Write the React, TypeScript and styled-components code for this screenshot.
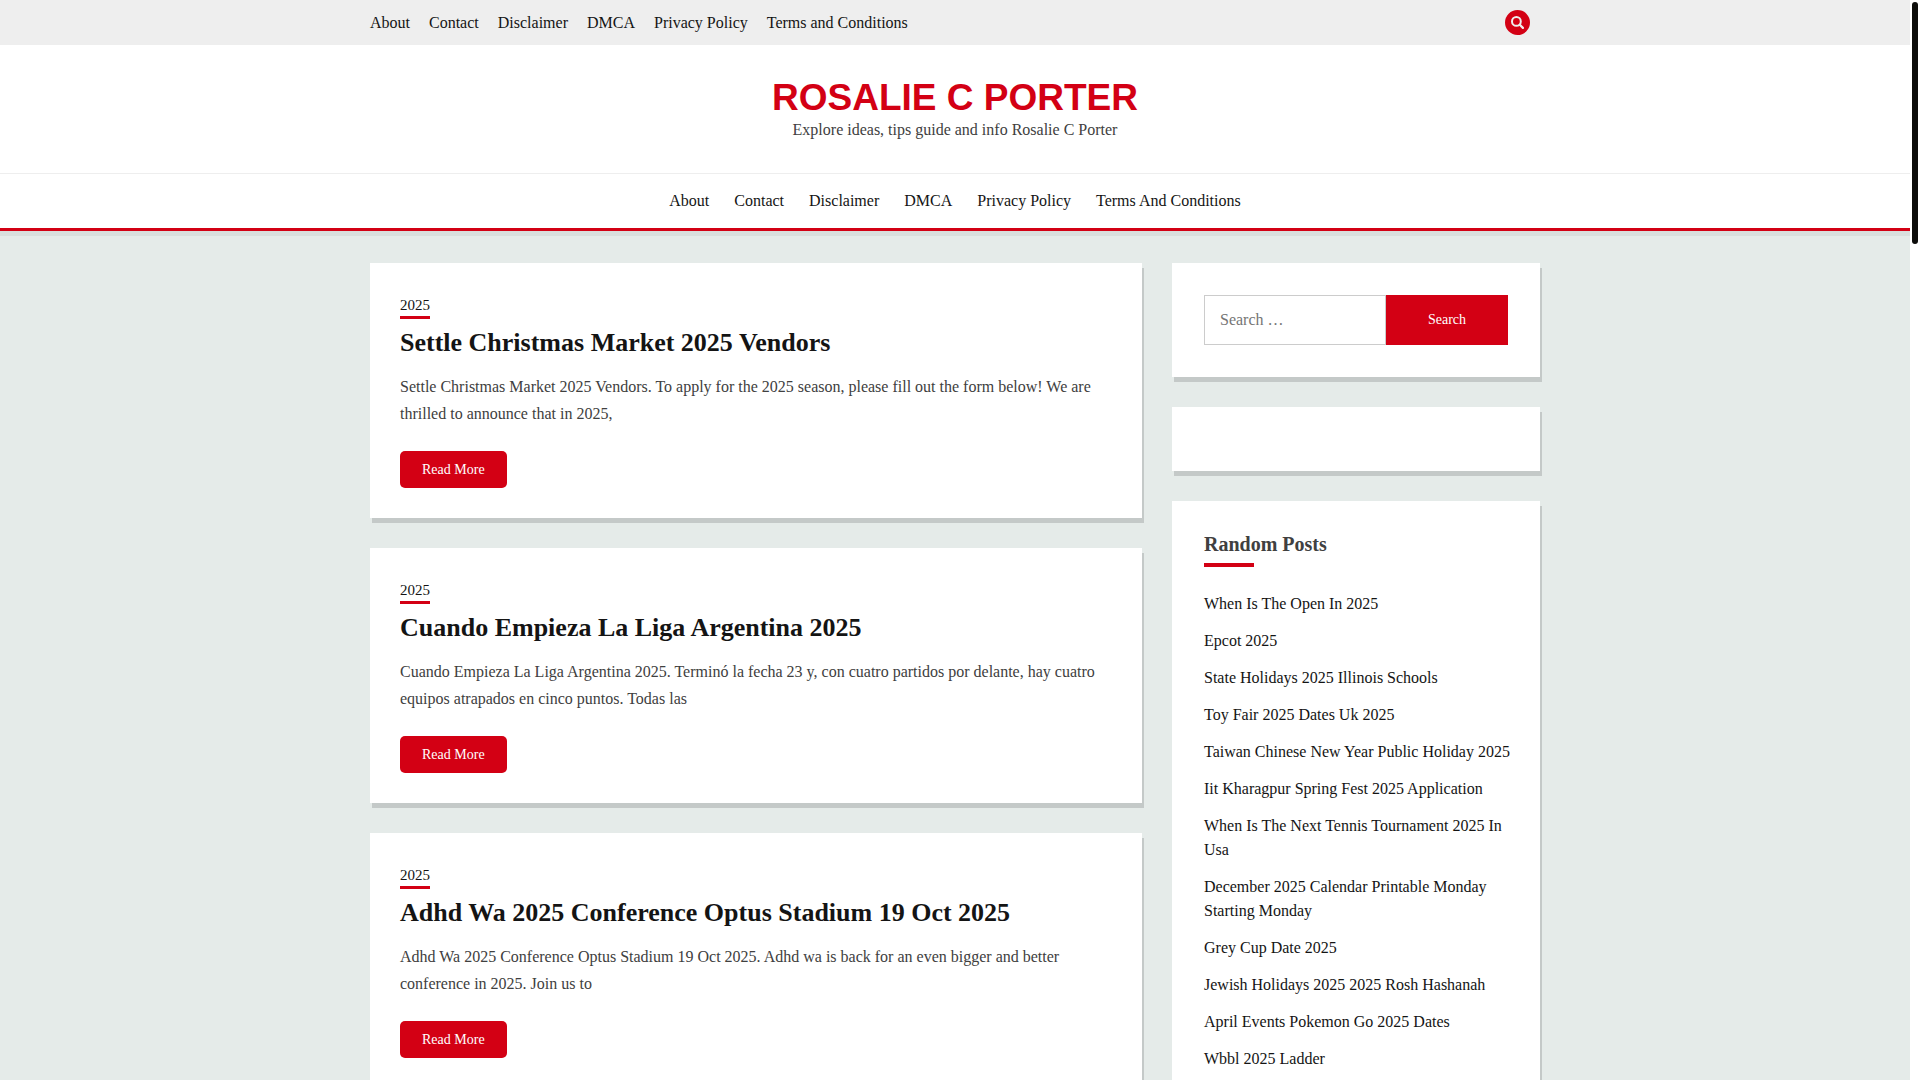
import React from "react";
import styled, { createGlobalStyle } from "styled-components";

const red = "#d30014";
const ink = "#141414";
const serif = `"Liberation Serif", "Times New Roman", serif`;

const GlobalStyle = createGlobalStyle`
  *, *::before, *::after { box-sizing: border-box; }
  body {
    margin: 0;
    overflow: hidden;
    background: #fff;
    color: #404040;
    font: 16px/27px ${serif};
  }
  a { color: ${ink}; text-decoration: none; }
  h1, h2, p, ul { margin: 0; padding: 0; }
  ul { list-style: none; }
`;

const Shell = styled.div`
  display: grid;
  grid-template-columns: minmax(0, 1fr) 10px;
  height: 100vh;
`;

const Page = styled.div`
  overflow: hidden;
  background: #e5ebe9;
`;

const ScrollTrack = styled.div`
  padding: 2px;
  background: #fff;
`;

const ScrollThumb = styled.div`
  height: 242px;
  border-radius: 3px;
  background: #0d0d0b;
`;

const Container = styled.div`
  max-width: 1170px;
  margin: 0 auto;
`;

const TopBar = styled.div`
  background: #eee;
`;

const TopBarInner = styled(Container)`
  display: flex;
  align-items: center;
  justify-content: space-between;
  padding: 9px 10px 9px 0;
`;

const Menu = styled.ul<{ $gap: number }>`
  display: flex;
  flex-wrap: wrap;
  justify-content: center;
  gap: 0 ${(p) => p.$gap}px;
`;

const SearchToggle = styled.button`
  display: grid;
  place-items: center;
  width: 25px;
  height: 25px;
  padding: 0;
  border: 0;
  border-radius: 50%;
  background: ${red};
  color: #eee;
  cursor: pointer;
`;

const Branding = styled.div`
  padding: 32px 0 31px;
  background: #fff;
  text-align: center;
`;

const SiteTitle = styled.h1`
  font: bold 37px/41px "Liberation Sans", Arial, sans-serif;
  text-transform: uppercase;

  a { color: ${red}; }
`;

const Tagline = styled.p`
  line-height: 24px;
`;

const MainNav = styled.nav`
  position: relative;
  padding: 13px 0 14px;
  border-top: 1px solid #eee;
  border-bottom: 3px solid ${red};
  background: #fff;
  box-shadow: 0 5px 0 rgba(0, 0, 0, 0.05);
`;

const Columns = styled(Container)`
  display: grid;
  grid-template-columns: minmax(0, 1fr) 368px;
  align-items: start;
  gap: 30px;
  padding-top: 32px;
`;

const Stack = styled.div`
  display: grid;
  grid-template-columns: minmax(0, 1fr);
  gap: 30px;
`;

const Card = styled.article`
  padding: 30px;
  background: #fff;
  box-shadow: 2px 5px 0 rgba(0, 0, 0, 0.14);
`;

const Widget = styled.section`
  padding: 32px;
  background: #fff;
  box-shadow: 2px 5px 0 rgba(0, 0, 0, 0.14);
`;

const Category = styled.a`
  display: block;
  width: fit-content;
  padding-top: 2px;
  border-bottom: 3px solid ${red};
  font-size: 15px;
  line-height: 21px;
`;

const PostTitle = styled.h2`
  margin: 6px 0 12px;
  font-size: 26px;
  line-height: 36px;
`;

const ReadMore = styled.a`
  display: block;
  width: fit-content;
  margin-top: 24px;
  padding: 10px 22px;
  border-radius: 5px;
  background: ${red};
  color: #fff;
  font-size: 14px;
  line-height: 17px;
`;

const SearchForm = styled.form`
  display: flex;
  height: 50px;
`;

const SearchField = styled.input`
  flex: 1;
  min-width: 0;
  padding: 0 15px;
  border: 1px solid #ccc;
  border-radius: 0;
  background: #fff;
  color: #404040;
  font: 16px ${serif};

  &::placeholder { color: #757575; }
`;

const SearchButton = styled.button`
  width: 122px;
  padding: 0;
  border: 0;
  background: ${red};
  color: #fff;
  font: 14px ${serif};
  cursor: pointer;
`;

const WidgetTitle = styled.h2`
  margin-bottom: 25px;
  font-size: 20px;
  line-height: 22px;

  &::after {
    content: "";
    display: block;
    width: 50px;
    height: 4px;
    margin-top: 8px;
    background: ${red};
  }
`;

const PostList = styled.ul`
  display: grid;
  gap: 13px;
  line-height: 24px;

  && { margin-right: -8px; }
`;

const topLinks = ["About", "Contact", "Disclaimer", "DMCA", "Privacy Policy", "Terms and Conditions"];
const navLinks = ["About", "Contact", "Disclaimer", "DMCA", "Privacy Policy", "Terms And Conditions"];

const posts = [
  {
    title: "Settle Christmas Market 2025 Vendors",
    excerpt:
      "Settle Christmas Market 2025 Vendors. To apply for the 2025 season, please fill out the form below! We are thrilled to announce that in 2025,",
  },
  {
    title: "Cuando Empieza La Liga Argentina 2025",
    excerpt:
      "Cuando Empieza La Liga Argentina 2025. Terminó la fecha 23 y, con cuatro partidos por delante, hay cuatro equipos atrapados en cinco puntos. Todas las",
  },
  {
    title: "Adhd Wa 2025 Conference Optus Stadium 19 Oct 2025",
    excerpt:
      "Adhd Wa 2025 Conference Optus Stadium 19 Oct 2025. Adhd wa is back for an even bigger and better conference in 2025. Join us to",
  },
];

const randomPosts = [
  "When Is The Open In 2025",
  "Epcot 2025",
  "State Holidays 2025 Illinois Schools",
  "Toy Fair 2025 Dates Uk 2025",
  "Taiwan Chinese New Year Public Holiday 2025",
  "Iit Kharagpur Spring Fest 2025 Application",
  "When Is The Next Tennis Tournament 2025 In Usa",
  "December 2025 Calendar Printable Monday Starting Monday",
  "Grey Cup Date 2025",
  "Jewish Holidays 2025 2025 Rosh Hashanah",
  "April Events Pokemon Go 2025 Dates",
  "Wbbl 2025 Ladder",
];

function Links({ items, gap }: { items: string[]; gap: number }) {
  return (
    <Menu $gap={gap}>
      {items.map((item) => (
        <li key={item}>
          <a href="#">{item}</a>
        </li>
      ))}
    </Menu>
  );
}

export default function App() {
  return (
    <Shell>
      <GlobalStyle />
      <Page>
        <header>
          <TopBar>
            <TopBarInner>
              <nav aria-label="Top">
                <Links items={topLinks} gap={19} />
              </nav>
              <SearchToggle type="button" aria-label="Open search">
                <svg width="13" height="13" viewBox="0 0 13 13" fill="none" stroke="currentColor" strokeWidth="2" strokeLinecap="round" aria-hidden="true">
                  <circle cx="5.4" cy="5.4" r="4.4" />
                  <path d="M8.8 8.8l3.1 3.1" strokeWidth="2.2" />
                </svg>
              </SearchToggle>
            </TopBarInner>
          </TopBar>
          <Branding>
            <SiteTitle>
              <a href="#">Rosalie C Porter</a>
            </SiteTitle>
            <Tagline>Explore ideas, tips guide and info Rosalie C Porter</Tagline>
          </Branding>
          <MainNav aria-label="Main">
            <Links items={navLinks} gap={25} />
          </MainNav>
        </header>
        <Columns>
          <Stack as="main">
            {posts.map((post) => (
              <Card key={post.title}>
                <Category href="#">2025</Category>
                <PostTitle>
                  <a href="#">{post.title}</a>
                </PostTitle>
                <p>{post.excerpt}</p>
                <ReadMore href="#">Read More</ReadMore>
              </Card>
            ))}
          </Stack>
          <Stack as="aside">
            <Widget>
              <SearchForm role="search" onSubmit={(e) => e.preventDefault()}>
                <SearchField type="search" aria-label="Search for" placeholder="Search …" />
                <SearchButton type="submit">Search</SearchButton>
              </SearchForm>
            </Widget>
            <Widget />
            <Widget>
              <WidgetTitle>Random Posts</WidgetTitle>
              <PostList>
                {randomPosts.map((title) => (
                  <li key={title}>
                    <a href="#">{title}</a>
                  </li>
                ))}
              </PostList>
            </Widget>
          </Stack>
        </Columns>
      </Page>
      <ScrollTrack aria-hidden="true">
        <ScrollThumb />
      </ScrollTrack>
    </Shell>
  );
}
